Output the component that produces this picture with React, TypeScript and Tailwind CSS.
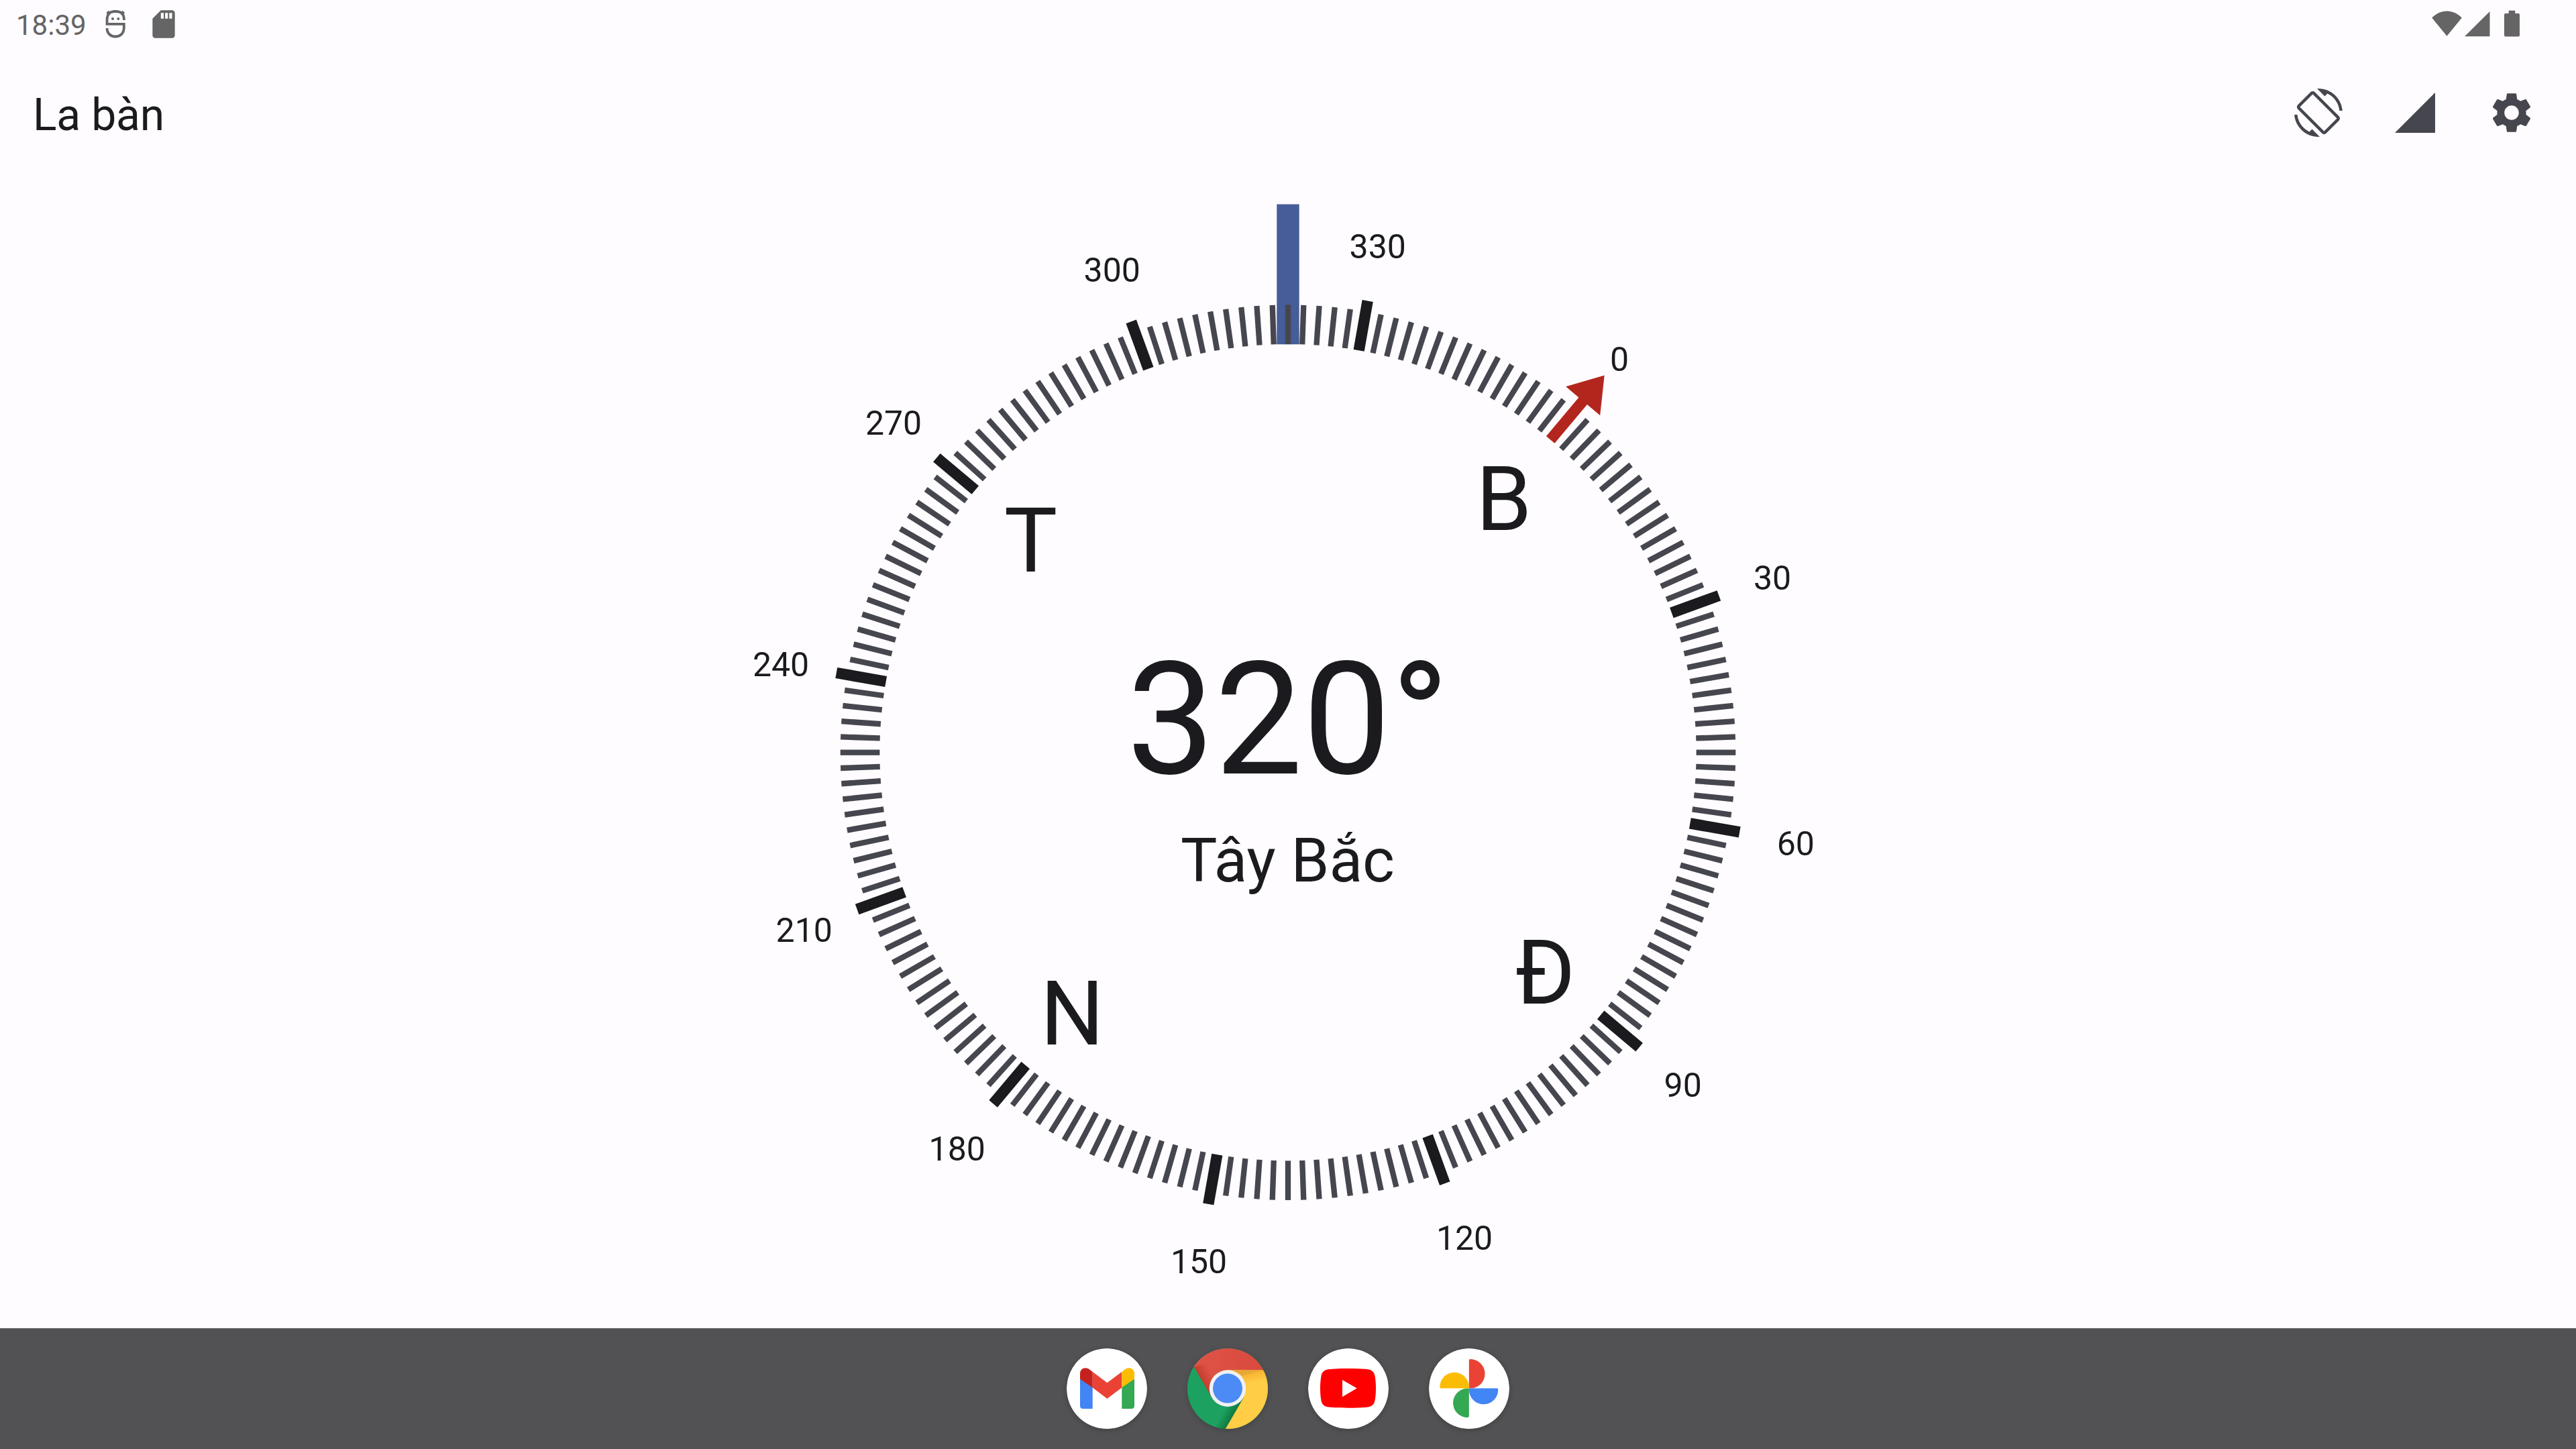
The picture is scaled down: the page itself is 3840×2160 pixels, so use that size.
import React from "react";
import { MdScreenRotation, MdSettings, MdSdCard } from "react-icons/md";

const HEADING = 320;
const CX = 1920;
const CY = 1121.7;
const RADIUS = 667.3;
const INNER = 608.6;
const MAJOR_OUTER = 683.6;
const LABEL_RADIUS = 768;
const CARDINAL_RADIUS = 500.6;

const ticks = Array.from({ length: 180 }, (_, i) => i * 2);
const labels = Array.from({ length: 12 }, (_, i) => i * 30);
const cardinals = [
  { deg: 0, text: "B" },
  { deg: 90, text: "Đ" },
  { deg: 180, text: "N" },
  { deg: 270, text: "T" },
];

function polar(deg: number, r: number) {
  const a = ((deg - HEADING) * Math.PI) / 180;
  return { x: CX + r * Math.sin(a), y: CY - r * Math.cos(a) };
}

function Compass() {
  return (
    <svg
      viewBox="0 240 3840 1740"
      className="block h-[1740px] w-full"
      fontFamily="Roboto, sans-serif"
      textAnchor="middle"
      fill="#1b1b1f"
    >
      <rect x={1903.3} y={304.5} width={33.4} height={208.8} fill="#465d99" />
      {ticks.map((deg) => {
        if (deg === 0) return null;
        const major = deg % 30 === 0;
        const outer = major ? MAJOR_OUTER : RADIUS;
        const w = major ? 16.4 : 8.3;
        return (
          <rect
            key={deg}
            x={CX - w / 2}
            y={CY - outer}
            width={w}
            height={outer - INNER}
            fill={major ? "#1b1b1f" : "#46464f"}
            transform={`rotate(${deg - HEADING} ${CX} ${CY})`}
          />
        );
      })}
      <g transform={`translate(${CX} ${CY}) rotate(${-HEADING})`}>
        <path d="M-8.200 -608.6 V-684 H-33.3 L0 -733.8 L33.3 -684 H8.200 V-608.6 Z" fill="#b3261e" />
      </g>
      {labels.map((deg) => {
        const p = polar(deg, LABEL_RADIUS);
        return (
          <text key={deg} x={p.x + 0.4} y={p.y + 19.7} fontSize={50}>
            {deg}
          </text>
        );
      })}
      {cardinals.map(({ deg, text }) => {
        const p = polar(deg, CARDINAL_RADIUS);
        return (
          <text key={text} x={p.x} y={p.y + 52.1} fontSize={133.4}>
            {text}
          </text>
        );
      })}
      <text x={CX} y={1152.7} fontSize={233.5}>
        {HEADING}°
      </text>
      <text x={CX - 0.5} y={1314} fontSize={91.4}>
        Tây Bắc
      </text>
    </svg>
  );
}

function StatusBar() {
  return (
    <div className="flex h-[72px] items-start justify-between text-[#656565]">
      <div className="flex items-start pl-6">
        <span className="mt-[13px] w-[127px] text-[42px] leading-[49px]">18:39</span>
        <svg width="42" height="48" viewBox="151 12 42 48" className="mt-3" fill="none" stroke="currentColor">
          <path d="M185 30 C185 20 180 17 172 17 C164 17 159.500 20 159.500 30 V35.900 H184.800 V41 C184.800 50 179 54.500 172 54.500 C165 54.500 159.500 50 159.500 42" strokeWidth="3.8" />
          <path d="M160 17.500 L164 21.500 M184.500 17.500 L180.500 21.500" strokeWidth="4.600" />
          <circle cx="168" cy="28" r="2" fill="currentColor" stroke="none" />
          <circle cx="176.300" cy="28" r="2" fill="currentColor" stroke="none" />
        </svg>
        <MdSdCard className="mt-[11px] ml-[26px] size-[50px]" />
      </div>
      <svg width="140" height="48" viewBox="3620 12 140 48" className="mt-3 mr-20" fill="currentColor">
        <path d="M3647.500 53.800 L3625.200 26.500 C3638 13 3657 13 3669.800 26.500 Z" />
        <path d="M3674 54.300 L3711.500 17 V54.300 Z" />
        <path d="M3739.700 15.700 H3749.300 V20 H3754 Q3756 20 3756 22 V52.600 Q3756 54.600 3754 54.600 H3735 Q3733 54.600 3733 52.600 V22 Q3733 20 3735 20 H3739.700 Z" />
      </svg>
    </div>
  );
}

function AppBar() {
  return (
    <header className="flex h-[168px] items-start justify-between pr-15 pl-[49px]">
      <h1 className="mt-[61px] text-[66px] leading-[78px] font-normal tracking-[-0.2px] text-[#1b1b1f]">La bàn</h1>
      <div className="mt-15 flex gap-18 text-[#46464f]">
        <MdScreenRotation className="size-18" />
        <svg viewBox="0 0 24 24" className="size-18" fill="currentColor">
          <path d="M2 22h20V2z" />
        </svg>
        <MdSettings className="size-18" />
      </div>
    </header>
  );
}

function DockIcon({ children }: { children: React.ReactNode }) {
  return (
    <div className="size-[120px] rounded-full shadow-[0_2px_8px_rgba(0,0,0,0.2)]">
      <svg viewBox="0 0 120 120" className="block size-full overflow-hidden rounded-full">
        {children}
      </svg>
    </div>
  );
}

function Gmail() {
  return (
    <DockIcon>
      <circle cx="60" cy="60" r="60" fill="#fff" />
      <path d="M20 45 L38.700 57 V90 H24.500 Q20 90 20 85.500 Z" fill="#4285f4" />
      <path d="M101 45 L82.300 57 V90 H96.500 Q101 90 101 85.500 Z" fill="#34a853" />
      <path d="M38.700 35 L60.400 51.200 L82.300 35 V58.600 L60.400 75 L38.700 58.600 Z" fill="#ea4335" />
      <path d="M20 45.700 V37.500 C20 30 28 26.700 34.500 31.700 L38.700 35 V58.600 L20 45.700 Z" fill="#c5221f" />
      <path d="M101 45.700 V37.500 C101 30 93 26.700 86.500 31.700 L82.300 35 V58.600 L101 45.700 Z" fill="#fbbc04" />
    </DockIcon>
  );
}

function Chrome() {
  return (
    <DockIcon>
      <defs>
        <linearGradient id="redFill" x1="0" y1="0" x2="1" y2="0">
          <stop offset="0" stopColor="#df5548" />
          <stop offset="1" stopColor="#da483c" />
        </linearGradient>
        <linearGradient id="redShade" gradientUnits="userSpaceOnUse" x1="21" y1="48" x2="37" y2="40">
          <stop offset="0" stopColor="#a52714" stopOpacity="0.5" />
          <stop offset="1" stopColor="#a52714" stopOpacity="0" />
        </linearGradient>
        <linearGradient id="yellowShade" gradientUnits="userSpaceOnUse" x1="90" y1="32" x2="94" y2="52">
          <stop offset="0" stopColor="#ea8100" stopOpacity="0.45" />
          <stop offset="1" stopColor="#ea8100" stopOpacity="0" />
        </linearGradient>
        <linearGradient id="greenShade" gradientUnits="userSpaceOnUse" x1="70" y1="98" x2="56" y2="90">
          <stop offset="0" stopColor="#055524" stopOpacity="0.55" />
          <stop offset="1" stopColor="#055524" stopOpacity="0" />
        </linearGradient>
      </defs>
      <rect width="120" height="120" fill="#1da160" />
      <path d="M60 60 L36 72 L10 27.700 L0 10 V0 H120 V32.300 L60 60 Z" fill="url(#redFill)" />
      <path d="M10 27.700 L35 71 L60 60 L28 22 Z" fill="url(#redShade)" />
      <path d="M60 32.300 H120 V120 H56.700 L84 73 L60 60 Z" fill="#ffcd46" />
      <path d="M60 32.300 H120 V52 H60 Z" fill="url(#yellowShade)" />
      <path d="M66 32.300 H113.300 L82 41 Z" fill="#e0a33c" opacity="0.6" />
      <path d="M84 73 L56.700 120 H36 L62 75 Z" fill="url(#greenShade)" />
      <circle cx="60" cy="59.600" r="27.300" fill="#f1f1f1" />
      <circle cx="60" cy="59.600" r="22" fill="#4c8bf5" />
    </DockIcon>
  );
}

function YouTube() {
  return (
    <DockIcon>
      <circle cx="60" cy="60" r="60" fill="#fff" />
      <path
        d="M60 30 C75 30 86 30.700 90.500 31.500 C95.500 32.500 98.700 36 99.500 41 C100.500 47 101 52 101 59.400 C101 67 100.500 72 99.500 77.800 C98.700 82.800 95.500 86.300 90.500 87.300 C86 88.100 75 88.700 60 88.700 C45 88.700 33 88.100 28.500 87.300 C23.500 86.300 20.300 82.800 19.500 77.800 C18.500 72 18 67 18 59.400 C18 52 18.500 47 19.500 41 C20.300 36 23.500 32.500 28.500 31.500 C33 30.700 45 30 60 30 Z"
        fill="#f00"
      />
      <path d="M51 47 L72.700 59.600 L51 72.300 Z" fill="#fff" />
    </DockIcon>
  );
}

function Photos() {
  const blade = "M0 0 V-41.500 Q0 -43.500 2 -43.500 A21.750 21.750 0 0 1 2 0 Z";
  return (
    <DockIcon>
      <circle cx="60" cy="60" r="60" fill="#fff" />
      <g transform="translate(59.8 59.6)">
        <path d={blade} fill="#ea4335" />
        <path d={blade} fill="#4285f4" transform="rotate(90)" />
        <path d={blade} fill="#34a853" transform="rotate(180)" />
        <path d={blade} fill="#fbbc04" transform="rotate(270)" />
      </g>
    </DockIcon>
  );
}

export default function App() {
  return (
    <div className="flex h-[2160px] w-[3840px] flex-col overflow-hidden bg-[#fefcff] font-['Roboto',sans-serif]">
      <StatusBar />
      <AppBar />
      <main className="h-[1740px]">
        <Compass />
      </main>
      <nav className="flex h-[180px] items-center justify-center gap-15 bg-[#525254]">
        <Gmail />
        <Chrome />
        <YouTube />
        <Photos />
      </nav>
    </div>
  );
}
